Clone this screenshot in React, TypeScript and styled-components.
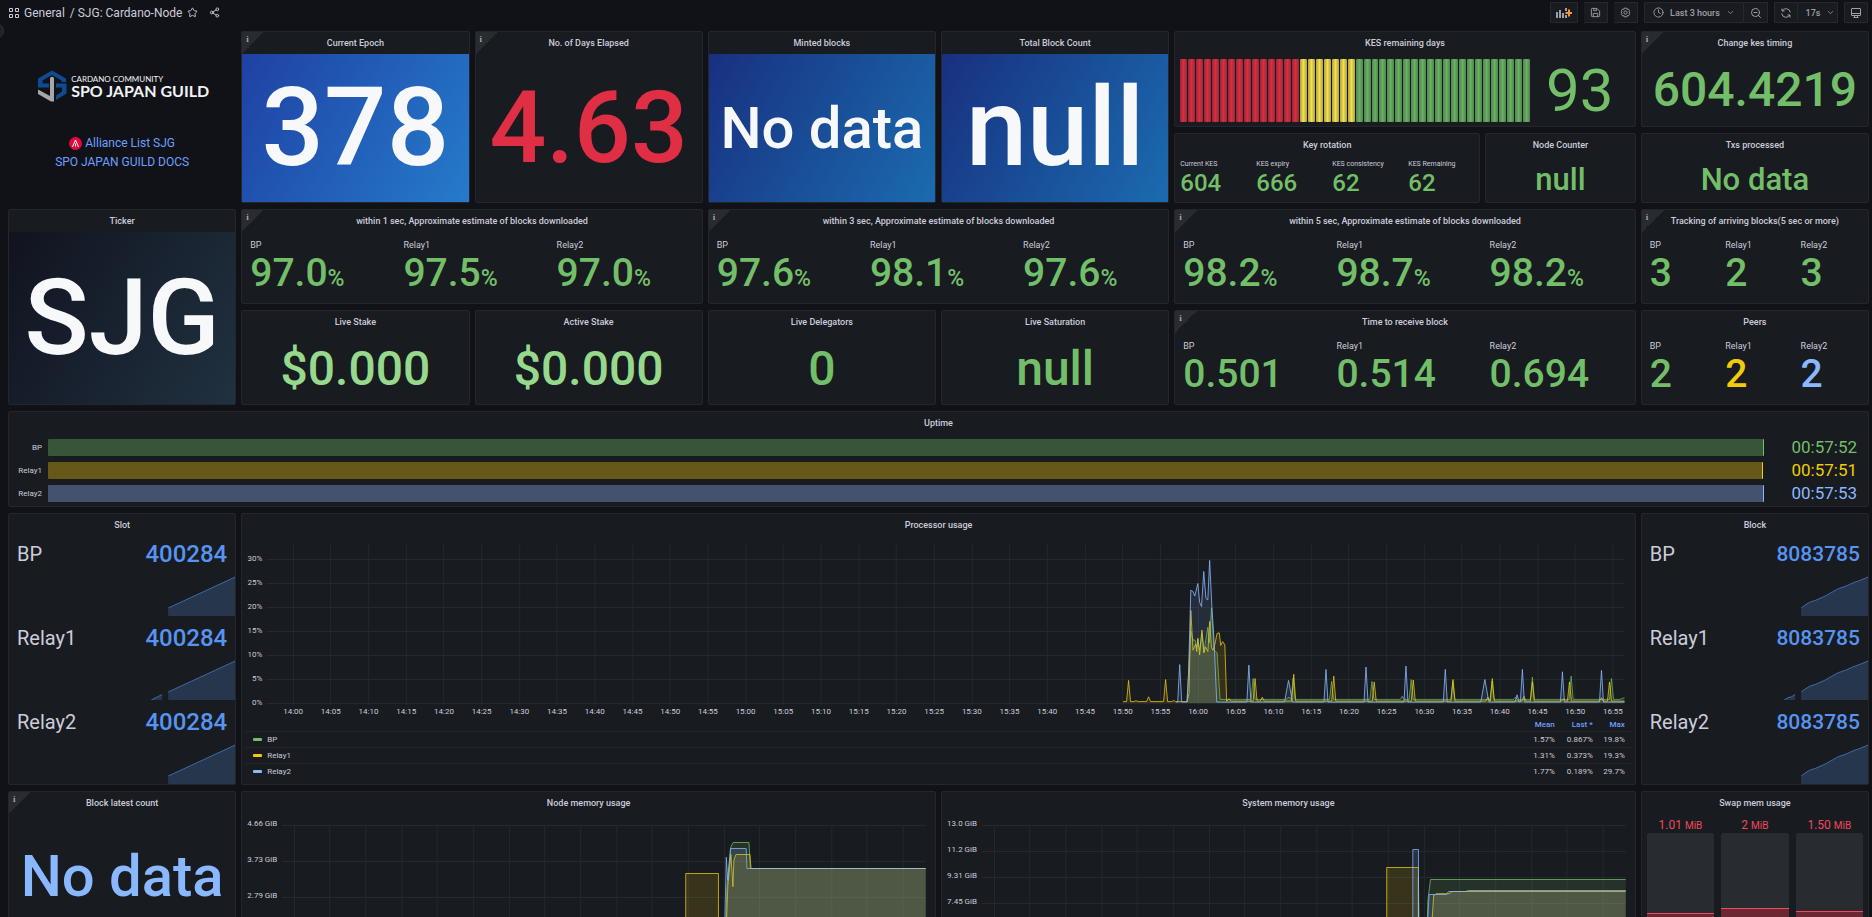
import React from "react";
import styled, { createGlobalStyle, css } from "styled-components";
import { Star, Share2, Clock, ChevronDown, ZoomOut } from "lucide-react";

const GREEN = "#73bf69";
const LIGHT_GREEN = "#96d98d";
const YELLOW = "#f2cc0c";
const BLUE = "#8ab8ff";
const STRONG_BLUE = "#5794f2";
const RED = "#e02f44";
const TEXT = "#ccccdc";
const LINK = "#6e9fff";

const Global = createGlobalStyle`
  * { box-sizing: border-box; }
  body {
    margin: 0;
    background: #111217;
    color: ${TEXT};
    font-family: Roboto, "Liberation Sans", sans-serif;
    font-size: 9px;
  }
  a { color: inherit; text-decoration: none; }
  button { font: inherit; }
`;

const Page = styled.div`
  height: 100vh;
  overflow: hidden;
`;

/* ---------- top bar ---------- */

const TopBar = styled.header`
  display: flex;
  align-items: center;
  justify-content: space-between;
  height: 25px;
  padding: 0 4px 0 8px;
`;

const Crumbs = styled.nav`
  display: flex;
  align-items: center;
  font-size: 12px;
  line-height: 16px;
  white-space: pre;
`;

const CrumbLink = styled.a`
  margin-left: 5px;
`;

const CrumbActions = styled.div`
  display: flex;
  gap: 11px;
  margin-left: 5px;
`;

const BareButton = styled.button`
  display: flex;
  padding: 0;
  border: 0;
  background: none;
  color: ${TEXT};
`;

const Tools = styled.div`
  display: flex;
  gap: 6px;
`;

const ToolGroup = styled.div`
  display: flex;
`;

const ToolButton = styled.button<{ $width: number }>`
  display: flex;
  align-items: center;
  justify-content: center;
  width: ${(p) => p.$width}px;
  height: 21px;
  padding: 0;
  border: 1px solid #26282e;
  border-radius: 1px;
  background: #181b1f;
  color: #9d9fab;
  font-size: 9px;
  font-weight: 500;
  & + & { border-left: 0; }
`;

const ToolText = styled.span`
  margin: 0 6px;
  white-space: nowrap;
`;

const SideToggle = styled.button`
  position: absolute;
  left: -12px;
  top: 23px;
  width: 16px;
  height: 16px;
  padding: 0;
  border: 1px solid #2d2f35;
  border-radius: 50%;
  background: #202226;
`;

/* ---------- panel grid ---------- */

const Board = styled.main`
  display: grid;
  grid-template-columns: repeat(24, minmax(0, 1fr));
  grid-template-rows: 96px 70px 95px 95px 96px 272px 147px;
  gap: 6px 5px;
  padding: 6px 3px 6px 8px;
`;

type Place = { $col: number; $span: number; $row: number; $rows?: number };

const place = css<Place>`
  grid-column: ${(p) => p.$col} / span ${(p) => p.$span};
  grid-row: ${(p) => p.$row} / span ${(p) => p.$rows ?? 1};
`;

const PanelBox = styled.section<Place>`
  ${place}
  position: relative;
  display: flex;
  flex-direction: column;
  min-width: 0;
  border: 1px solid #24262b;
  border-radius: 2px;
  background: #181b1f;
`;

const PanelTitle = styled.h2`
  flex: none;
  margin: 0;
  font-size: 9px;
  font-weight: 500;
  line-height: 22px;
  text-align: center;
  white-space: nowrap;
`;

const InfoCorner = styled.span`
  position: absolute;
  left: 0;
  top: 0;
  width: 22px;
  height: 22px;
  padding: 3px 0 0 4px;
  background: linear-gradient(135deg, #282b30 50%, transparent 50%);
  color: #a4a5af;
  font: 700 9px/9px "Liberation Serif", serif;
`;

type PanelProps = {
  title: string;
  col: number;
  span: number;
  row: number;
  rows?: number;
  info?: boolean;
  children: React.ReactNode;
};

const Panel = ({ title, col, span, row, rows, info, children }: PanelProps) => (
  <PanelBox $col={col} $span={span} $row={row} $rows={rows}>
    {info && <InfoCorner>i</InfoCorner>}
    <PanelTitle>{title}</PanelTitle>
    {children}
  </PanelBox>
);

/* ---------- stat panels ---------- */

const BigValue = styled.div<{ $size: number; $color: string; $fill?: string }>`
  flex: 1;
  display: flex;
  align-items: center;
  justify-content: center;
  min-height: 0;
  background: ${(p) => p.$fill ?? "none"};
  color: ${(p) => p.$color};
  font-size: ${(p) => p.$size}px;
  font-weight: 500;
  line-height: 1;
  white-space: nowrap;
`;

const StatRow = styled.dl<{ $compact?: boolean }>`
  display: flex;
  margin: 0;
  padding-top: ${(p) => (p.$compact ? 4 : 7)}px;
`;

const Stat = styled.div<{ $compact?: boolean }>`
  flex: 1;
  min-width: 0;
  padding-left: ${(p) => (p.$compact ? 5 : 8)}px;
  white-space: nowrap;
`;

const StatLabel = styled.dt<{ $compact?: boolean }>`
  font-size: ${(p) => (p.$compact ? 7 : 9)}px;
  line-height: ${(p) => (p.$compact ? 8 : 12)}px;
`;

const StatValue = styled.dd<{ $compact?: boolean; $color: string }>`
  margin: 0;
  color: ${(p) => p.$color};
  font-size: ${(p) => (p.$compact ? 24 : 39)}px;
  font-weight: 500;
  line-height: ${(p) => (p.$compact ? 30 : 44)}px;
`;

const Unit = styled.span`
  font-size: 23px;
`;

type StatItem = { label: string; value: string; unit?: string; color?: string };

const Stats = ({ items, compact }: { items: StatItem[]; compact?: boolean }) => (
  <StatRow $compact={compact}>
    {items.map((s) => (
      <Stat key={s.label} $compact={compact}>
        <StatLabel $compact={compact}>{s.label}</StatLabel>
        <StatValue $compact={compact} $color={s.color ?? GREEN}>
          {s.value}
          {s.unit && <Unit>{s.unit}</Unit>}
        </StatValue>
      </Stat>
    ))}
  </StatRow>
);

const nodes = (values: string[], unit?: string, colors: string[] = []): StatItem[] =>
  ["BP", "Relay1", "Relay2"].map((label, i) => ({ label, value: values[i], unit, color: colors[i] }));

/* ---------- guild text panel ---------- */

const Guild = styled.section<Place>`
  ${place}
  display: flex;
  flex-direction: column;
  align-items: center;
  padding-top: 39px;
`;

const GuildBrand = styled.div`
  display: flex;
  align-items: center;
  gap: 4px;
  padding-left: 3px;
  color: #f2f2f4;
  font-family: Lato, sans-serif;
  white-space: nowrap;
`;

const GuildSmall = styled.div`
  font-size: 8px;
  font-weight: 400;
  line-height: 9px;
`;

const GuildName = styled.div`
  font-size: 16px;
  font-weight: 700;
  line-height: 14px;
`;

const GuildLinks = styled.div`
  display: flex;
  flex-direction: column;
  align-items: center;
  margin-top: 32px;
  color: ${LINK};
  font-size: 12px;
  line-height: 19px;
`;

const GuildLink = styled.a`
  display: flex;
  align-items: center;
  gap: 3px;
`;

const GuildMark = () => (
  <svg width="29" height="32" viewBox="0 0 29 32" aria-hidden="true">
    <path d="M0 17.500V8.500L14 0.500L28 8.500V12H23.500V10.500L14 5 4.500 10.500V13.500H11V17.500Z" fill="#0f4a94" />
    <path d="M28.500 13.500V23.500L18 30V25.500L24 21.500V17.500H18V13.500Z" fill="#0f4a94" />
    <path d="M12 8Q14 5.500 16 8V31.500H13L0 24V19.500L12 26Z" fill="#a6a7a9" />
  </svg>
);

/* ---------- KES gauge ---------- */

const Gauge = styled.div`
  flex: 1;
  display: flex;
  padding: 5px 5px 4px;
`;

const Cells = styled.div`
  flex: 1;
  display: flex;
  gap: 1px;
`;

const Cell = styled.span<{ $edge: string; $mid: string }>`
  flex: 1;
  border-radius: 1px;
  background: linear-gradient(90deg, ${(p) => p.$edge}, ${(p) => p.$mid}, ${(p) => p.$edge});
`;

const GaugeValue = styled.span`
  width: 100px;
  color: ${GREEN};
  font-size: 60px;
  line-height: 63px;
  text-align: center;
`;

const cellTone = (i: number) =>
  i < 15 ? ["#98283a", "#d92e43"] : i < 22 ? ["#aea03e", "#f2e04d"] : ["#4f8450", "#6bb062"];

/* ---------- uptime ---------- */

const Bars = styled.div`
  display: flex;
  flex-direction: column;
  gap: 6px;
  padding: 5px 0 0 7px;
`;

const BarRow = styled.div`
  display: grid;
  grid-template-columns: 26px minmax(0, 1fr) 98px;
  column-gap: 6px;
  align-items: center;
  height: 17px;
`;

const BarName = styled.span`
  font-size: 8px;
  text-align: right;
`;

const BarTrack = styled.div`
  height: 17px;
`;

const BarFill = styled.div<{ $fill: string; $edge: string }>`
  height: 17px;
  border-right: 1px solid ${(p) => p.$edge};
  border-radius: 1px;
  background: ${(p) => p.$fill};
`;

const BarValue = styled.span<{ $color: string }>`
  padding-right: 11px;
  color: ${(p) => p.$color};
  font-size: 17px;
  line-height: 17px;
  text-align: right;
`;

const uptime = [
  { name: "BP", value: "00:57:52", seconds: 3472, fill: "#385539", edge: GREEN },
  { name: "Relay1", value: "00:57:51", seconds: 3471, fill: "#655818", edge: YELLOW },
  { name: "Relay2", value: "00:57:53", seconds: 3473, fill: "#43536f", edge: BLUE },
];

/* ---------- slot / block ---------- */

const SparkList = styled.div`
  flex: 1;
  display: flex;
  flex-direction: column;
  justify-content: flex-end;
  gap: 8px;
`;

const SparkItem = styled.div`
  display: flex;
  flex-direction: column;
  gap: 8px;
`;

const SparkHead = styled.div`
  display: flex;
  justify-content: space-between;
  padding: 0 8px;
  font-size: 20px;
  line-height: 28px;
`;

const SparkValue = styled.span<{ $size: number }>`
  color: ${STRONG_BLUE};
  font-size: ${(p) => p.$size}px;
  font-weight: 500;
`;

const Stretch = styled.svg`
  display: block;
  width: 100%;
  overflow: hidden;
`;

type Pt = [number, number];
const toPath = (pts: Pt[]) => "M" + pts.map(([x, y]) => `${x} ${y}`).join("L");
const toArea = (pts: Pt[], base: number) =>
  `${toPath(pts)}L${pts[pts.length - 1][0]} ${base}L${pts[0][0]} ${base}Z`;

const Area = ({ pts, base, color, fillOpacity, opacity = 0.8 }: {
  pts: Pt[]; base: number; color: string; fillOpacity: number; opacity?: number;
}) => (
  <g>
    <path d={toArea(pts, base)} fill={color} fillOpacity={fillOpacity} />
    <path d={toPath(pts)} fill="none" stroke={color} strokeOpacity={opacity} vectorEffect="non-scaling-stroke" />
  </g>
);

const slotLine: Pt[] = [[159, 32], [226, 1]];
const slotGap: Pt[] = [[142, 40], [153, 34.5]];
const blockLine: Pt[] = [[159, 32], [163, 29], [168, 26], [173, 24.5], [183, 20], [196, 12.7], [204, 10], [211, 6.7], [216, 5], [226, 1]];
const blockGap: Pt[] = [[142, 40], [146, 37.5], [149, 37], [153, 34.5]];

const Sparks = ({ value, size, line, gap }: { value: string; size: number; line: Pt[]; gap: Pt[] }) => (
  <SparkList>
    {["BP", "Relay1", "Relay2"].map((name) => (
      <SparkItem key={name}>
        <SparkHead>
          <span>{name}</span>
          <SparkValue $size={size}>{value}</SparkValue>
        </SparkHead>
        <Stretch height="40" viewBox="0 0 226 40" preserveAspectRatio="none">
          {name === "Relay1" && <Area pts={gap} base={40} color={STRONG_BLUE} fillOpacity={0.22} opacity={0.6} />}
          <Area pts={line} base={40} color={STRONG_BLUE} fillOpacity={0.22} opacity={0.6} />
        </Stretch>
      </SparkItem>
    ))}
  </SparkList>
);

/* ---------- processor chart ---------- */

const PlotRow = styled.div<{ $top: number; $right: number }>`
  display: flex;
  gap: 5px;
  padding: ${(p) => p.$top}px ${(p) => p.$right}px 0 4px;
`;

const YAxis = styled.div<{ $width: number; $step: number; $lead?: number }>`
  flex: none;
  display: flex;
  flex-direction: column;
  gap: ${(p) => p.$step - 10}px;
  width: ${(p) => p.$width}px;
  padding-top: ${(p) => p.$lead ?? 0}px;
  font-size: 8px;
  line-height: 10px;
  text-align: right;
  white-space: nowrap;
`;

const PlotArea = styled.div<{ $lead?: number }>`
  flex: 1;
  min-width: 0;
  padding-top: ${(p) => p.$lead ?? 0}px;
`;

const XAxis = styled.div`
  display: grid;
  grid-template-columns: repeat(36, minmax(0, 1fr));
  margin: 1px -7px 0 7px;
  font-size: 8px;
  line-height: 12px;
  text-align: center;
`;

const CpuLegend = styled.table`
  margin: 0 4px;
  border-collapse: collapse;
  font-size: 8px;
  line-height: 15px;
  th, td { padding: 0; font-weight: 400; text-align: right; }
  thead th { color: ${LINK}; font-weight: 500; line-height: 13px; }
  tbody tr { border-top: 1px solid #24272c; }
  th:first-child { text-align: left; padding-left: 7px; }
  th:last-child, td:last-child { padding-right: 6px; }
`;

const NumCol = styled.col<{ $width: number }>`
  width: ${(p) => p.$width}px;
`;

const Swatch = styled.i<{ $color: string }>`
  display: inline-block;
  width: 9px;
  height: 3px;
  margin-right: 5px;
  border-radius: 1px;
  background: ${(p) => p.$color};
  vertical-align: middle;
`;

/* Joins a flat idle level with narrow load peaks: [x, percent, half width]. */
const peaks = (from: number, to: number, idle: number, list: [number, number, number?][]): Pt[] => {
  const out: Pt[] = [[from, idle]];
  list.forEach(([x, v, w = 2]) => out.push([x - w, idle], [x, v], [x + w, idle]));
  out.push([to, idle]);
  return out;
};

const cpuYellow: Pt[] = [
  ...peaks(855, 919, 0.3, [[860.6, 4.7], [868, 0.5], [880.6, 1.3], [897.6, 4.9], [905.7, 0.5]]),
  [921, 2], [922.8, 19.3], [925, 11], [927.6, 12.3], [928.7, 10.7], [929.8, 13.5], [931.6, 10], [933.9, 15.2],
  [936, 10.5], [937.5, 11.7], [939.8, 10.7], [941.6, 17], [943.5, 11.5], [945, 11], [946.8, 12.2], [949, 14.5],
  [951.2, 14.6], [952.7, 12], [954.6, 12.8], [956.8, 12.1],
  ...peaks(958.6, 1356, 0.4, [[961, 0.9], [987, 5.1], [994.2, 1.2], [1025.6, 6], [1065.6, 5.6], [1106, 4.4],
    [1145, 4.8], [1184.7, 4.9], [1219.5, 1.2], [1224, 5.1], [1255.5, 1.4], [1264, 4.4], [1295, 0.9], [1301, 4.4], [1333, 1.1], [1341, 4.4]]),
];
const cpuGreen: Pt[] = [
  [919, 0.3], [922.8, 15], [925, 13.1], [927, 13.1], [928.7, 11.5], [929.8, 13.3], [931.6, 11], [933.9, 14.6],
  [935.7, 10.5], [939.8, 15.8], [941.3, 12.5], [943.5, 19.8], [946, 11], [949, 10.5],
  ...peaks(952, 1351, 0.75, [[985, 5.1], [1020.8, 1.2, 3], [1025, 5.2], [1063.4, 4.5], [1103.7, 4.5], [1134, 1.4],
    [1142.9, 4.9], [1184.5, 4.5], [1223.7, 4.6], [1247, 1.2], [1264, 5.4], [1302.7, 5.6], [1343, 5.1]]),
  [1356, 1.1],
];
const cpuBlue: Pt[] = [
  ...peaks(908, 919, 0.2, [[911.7, 8]]),
  [920.5, 6], [922.8, 23.5], [925, 23.2], [926.8, 22.3], [929.8, 24.9], [931.6, 21], [933.5, 20.1], [935.7, 27.4],
  [937.9, 21.8], [939.8, 21.5], [941.6, 29.7], [943.8, 20.2], [946, 13],
  ...peaks(948.7, 1356, 0.2, [[980.8, 7.9], [1020.4, 4.7, 4], [1057.8, 7], [1097.8, 7.5], [1137.7, 7.7], [1177, 7],
    [1216.5, 4.9, 4], [1248.7, 1.7], [1254, 7], [1294, 6.5], [1333, 6.8]]),
];

const cpuBase = 159;
const cpuScale = (pts: Pt[]): Pt[] => pts.map(([x, v]) => [x, Math.round((cpuBase - v * 4.8) * 10) / 10]);
const clock = (minutes: number) =>
  `${14 + Math.floor(minutes / 60)}:${String(minutes % 60).padStart(2, "0")}`;

const GridLine = ({ d }: { d: string }) => (
  <path d={d} stroke="#25282d" fill="none" vectorEffect="non-scaling-stroke" />
);

const ProcessorChart = () => (
  <>
    <PlotRow $top={8} $right={10}>
      <YAxis $width={16} $step={24} $lead={10}>
        {["30%", "25%", "20%", "15%", "10%", "5%", "0%"].map((t) => <span key={t}>{t}</span>)}
      </YAxis>
      <PlotArea>
        <Stretch height="161" viewBox="0 0 1356 161" preserveAspectRatio="none">
          {[0, 1, 2, 3, 4, 5, 6].map((i) => <GridLine key={i} d={`M0 ${15.5 + i * 24}H1356`} />)}
          {Array.from({ length: 36 }, (_, i) => (
            <GridLine key={i} d={`M${Math.round(25.7 + i * 37.67) + 0.5} 0V161`} />
          ))}
          <Area pts={cpuScale(cpuGreen)} base={cpuBase} color={GREEN} fillOpacity={0.16} opacity={0.7} />
          <Area pts={cpuScale(cpuYellow)} base={cpuBase} color={YELLOW} fillOpacity={0.13} opacity={0.75} />
          <Area pts={cpuScale(cpuBlue)} base={cpuBase} color={BLUE} fillOpacity={0.12} opacity={0.8} />
        </Stretch>
        <XAxis>
          {Array.from({ length: 36 }, (_, i) => <span key={i}>{clock(i * 5)}</span>)}
        </XAxis>
      </PlotArea>
    </PlotRow>
    <CpuLegend>
      <colgroup>
        <col />
        <NumCol $width={44} />
        <NumCol $width={38} />
        <NumCol $width={38} />
      </colgroup>
      <thead>
        <tr><th /><th scope="col">Mean</th><th scope="col">Last *</th><th scope="col">Max</th></tr>
      </thead>
      <tbody>
        {[
          ["BP", GREEN, "1.57%", "0.867%", "19.8%"],
          ["Relay1", YELLOW, "1.31%", "0.373%", "19.3%"],
          ["Relay2", BLUE, "1.77%", "0.189%", "29.7%"],
        ].map(([name, color, mean, last, max]) => (
          <tr key={name}>
            <th scope="row"><Swatch $color={color} />{name}</th>
            <td>{mean}</td><td>{last}</td><td>{max}</td>
          </tr>
        ))}
      </tbody>
    </CpuLegend>
  </>
);

/* ---------- memory charts ---------- */

type Series = { color: string; pts: Pt[] };

const nodeMem: Series[] = [
  { color: GREEN, pts: [[441.5, 112], [443, 62], [447, 21.7], [449.3, 17.5], [465, 17.5], [466.3, 43.5], [641, 43.5]] },
  { color: YELLOW, pts: [[402, 112], [402, 48.5], [434.6, 48.5], [434.6, 112]] },
  { color: YELLOW, pts: [[442, 112], [444, 60], [447, 29.5], [449, 61.7], [450, 35], [452, 29.5], [466, 29.5], [467, 43.5], [641, 43.5]] },
  { color: BLUE, pts: [[440.6, 112], [442.4, 32.3], [443.8, 55], [446.6, 23.5], [462.2, 23.5], [463, 43.5], [641, 43.5]] },
];

const systemMem: Series[] = [
  { color: GREEN, pts: [[434.5, 112], [434.5, 53], [435.5, 112]] },
  { color: GREEN, pts: [[443, 112], [444, 75], [446.6, 54.5], [641, 54.5]] },
  { color: YELLOW, pts: [[403, 112], [403, 42.5], [434.6, 42.5], [434.6, 112]] },
  { color: YELLOW, pts: [[447, 112], [449.8, 70], [453, 68.7], [465.4, 68.7], [468, 66.5], [641, 66.5]] },
  { color: BLUE, pts: [[429, 112], [429, 24.5], [434.6, 24.5], [434.6, 112]] },
  { color: BLUE, pts: [[443, 112], [445.2, 69.5], [462.6, 69.5], [464.5, 66.5], [481.5, 66.5], [484.7, 65.5], [641, 65.5]] },
];

const MemoryChart = ({ ticks, step, series }: { ticks: string[]; step: number; series: Series[] }) => (
  <PlotRow $top={5} $right={9}>
    <YAxis $width={31} $step={step}>
      {ticks.map((t) => <span key={t}>{t}</span>)}
    </YAxis>
    <PlotArea $lead={6}>
      <Stretch height="112" viewBox="0 0 641 112" preserveAspectRatio="none">
        {ticks.map((t, i) => <GridLine key={t} d={`M0 ${0.5 + i * step}H641`} />)}
        {Array.from({ length: 18 }, (_, i) => (
          <GridLine key={i} d={`M${Math.round(11.8 + i * 35.65) + 0.5} 0V112`} />
        ))}
        {series.map((s, i) => (
          <Area key={i} pts={s.pts} base={112} color={s.color} fillOpacity={0.15} opacity={0.75} />
        ))}
      </Stretch>
    </PlotArea>
  </PlotRow>
);

/* ---------- swap ---------- */

const SwapRow = styled.div`
  flex: 1;
  display: flex;
  gap: 7px;
  padding: 4px 5px 5px;
`;

const SwapCol = styled.div`
  flex: 1;
  display: flex;
  flex-direction: column;
  color: #f2495c;
  font-size: 12px;
  line-height: 14px;
  text-align: center;
  white-space: nowrap;
`;

const SwapUnit = styled.span`
  font-size: 10px;
`;

const SwapTrack = styled.div`
  flex: 1;
  display: flex;
  align-items: flex-end;
  border-radius: 2px;
  background: #282b30;
`;

const SwapFill = styled.div`
  flex: 1;
  border-top: 1px solid #f2495c;
  background: #6b2732;
`;

/* ---------- toolbar icons ---------- */

const AppsIcon = () => (
  <svg width="11" height="11" viewBox="0 0 11 11" fill="none" stroke="currentColor" aria-hidden="true">
    <path d="M1.500 1.500h3v3h-3zM7.500 1.500h3v3h-3zM1.500 7.500h3v3h-3zM7.500 7.500h3v3h-3z" />
  </svg>
);
const AddPanelIcon = () => (
  <svg width="16" height="12" viewBox="0 0 16 12" aria-hidden="true">
    <path d="M0 5h2v6H0zM3 3h2v8H3zM6 6h2v5H6zM9 1h2v3H9zM9 8h2v3H9z" fill="#9d9fab" />
    <path d="M12 2.500h2v2.500h2v2h-2v2.500h-2V7H9.500V5H12z" fill="#f8962e" />
  </svg>
);
const SaveIcon = () => (
  <svg width="11" height="11" viewBox="0 0 24 24" fill="none" stroke="currentColor" strokeWidth="2" aria-hidden="true">
    <path d="M3 5a2 2 0 0 1 2-2h10l6 6v10a2 2 0 0 1-2 2H5a2 2 0 0 1-2-2zM8 3v5h6V3M7 21v-7h10v7" />
  </svg>
);
const CogIcon = () => (
  <svg width="11" height="11" viewBox="0 0 24 24" fill="none" stroke="currentColor" strokeWidth="2" aria-hidden="true">
    <path d="M9.500 2.500h5l.7 2.700 2.600-1 3 3.600-1.300 2.400 2.500 1.800-2.500 1.800 1.300 2.400-3 3.600-2.600-1-.7 2.700h-5l-.7-2.700-2.600 1-3-3.600 1.300-2.400L2 12l2.500-1.800-1.300-2.400 3-3.600 2.600 1z" />
    <circle cx="12" cy="12" r="3.500" />
  </svg>
);
const SyncIcon = () => (
  <svg width="12" height="12" viewBox="0 0 24 24" fill="none" stroke="currentColor" strokeWidth="2" aria-hidden="true">
    <path d="M4 3v5h5M20 21v-5h-5M4.500 8A8.500 8.500 0 0 1 20.500 11M19.500 16A8.500 8.500 0 0 1 3.500 13" />
  </svg>
);
const MonitorIcon = () => (
  <svg width="12" height="12" viewBox="0 0 24 24" fill="none" stroke="currentColor" strokeWidth="2" aria-hidden="true">
    <path d="M4 3h16a1 1 0 0 1 1 1v12a1 1 0 0 1-1 1H4a1 1 0 0 1-1-1V4a1 1 0 0 1 1-1zM3 13h18M9 17v4M15 17v4M7 21h10" />
  </svg>
);

const DEEP = "linear-gradient(120deg, #18307f, #1b6bb0)";

export default function App() {
  return (
    <Page>
      <Global />
      <TopBar>
        <Crumbs>
          <AppsIcon />
          <CrumbLink href="#general">General</CrumbLink>
          <CrumbLink href="#dashboard">/ SJG: Cardano-Node</CrumbLink>
          <CrumbActions>
            <BareButton aria-label="Mark as favorite"><Star size={11} /></BareButton>
            <BareButton aria-label="Share dashboard"><Share2 size={11} /></BareButton>
          </CrumbActions>
        </Crumbs>
        <Tools>
          <ToolButton $width={28} aria-label="Add panel"><AddPanelIcon /></ToolButton>
          <ToolButton $width={24} aria-label="Save dashboard"><SaveIcon /></ToolButton>
          <ToolButton $width={24} aria-label="Dashboard settings"><CogIcon /></ToolButton>
          <ToolGroup>
            <ToolButton $width={100}>
              <Clock size={11} /><ToolText>Last 3 hours</ToolText><ChevronDown size={9} />
            </ToolButton>
            <ToolButton $width={24} aria-label="Zoom out"><ZoomOut size={12} /></ToolButton>
          </ToolGroup>
          <ToolGroup>
            <ToolButton $width={24} aria-label="Refresh"><SyncIcon /></ToolButton>
            <ToolButton $width={40}><ToolText>17s</ToolText><ChevronDown size={9} /></ToolButton>
          </ToolGroup>
          <ToolButton $width={24} aria-label="Cycle view mode"><MonitorIcon /></ToolButton>
        </Tools>
      </TopBar>
      <SideToggle aria-label="Open menu" />

      <Board>
        <Guild $col={1} $span={3} $row={1} $rows={2}>
          <GuildBrand>
            <GuildMark />
            <div>
              <GuildSmall>CARDANO COMMUNITY</GuildSmall>
              <GuildName>SPO JAPAN GUILD</GuildName>
            </div>
          </GuildBrand>
          <GuildLinks>
            <GuildLink href="#alliance">
              <svg width="13" height="13" viewBox="0 0 13 13" aria-hidden="true">
                <circle cx="6.500" cy="6.500" r="6.500" fill="#e3083c" />
                <path d="M3.500 10L6.500 3L9.500 10M6.500 6.500V9.500" fill="none" stroke="#fff" />
              </svg>
              Alliance List SJG
            </GuildLink>
            <GuildLink href="#docs">SPO JAPAN GUILD DOCS</GuildLink>
          </GuildLinks>
        </Guild>

        <Panel title="Current Epoch" col={4} span={3} row={1} rows={2} info>
          <BigValue $size={110} $color="#f7f8fa" $fill="linear-gradient(120deg, #1f41a4, #257bcb)">378</BigValue>
        </Panel>
        <Panel title="No. of Days Elapsed" col={7} span={3} row={1} rows={2} info>
          <BigValue $size={100} $color={RED}>4.63</BigValue>
        </Panel>
        <Panel title="Minted blocks" col={10} span={3} row={1} rows={2}>
          <BigValue $size={58} $color="#f7f8fa" $fill={DEEP}>No data</BigValue>
        </Panel>
        <Panel title="Total Block Count" col={13} span={3} row={1} rows={2}>
          <BigValue $size={110} $color="#f7f8fa" $fill={DEEP}>null</BigValue>
        </Panel>
        <Panel title="KES remaining days" col={16} span={6} row={1}>
          <Gauge>
            <Cells>
              {Array.from({ length: 44 }, (_, i) => {
                const [edge, mid] = cellTone(i);
                return <Cell key={i} $edge={edge} $mid={mid} />;
              })}
            </Cells>
            <GaugeValue>93</GaugeValue>
          </Gauge>
        </Panel>
        <Panel title="Change kes timing" col={22} span={3} row={1} info>
          <BigValue $size={48} $color={GREEN}>604.4219</BigValue>
        </Panel>
        <Panel title="Key rotation" col={16} span={4} row={2}>
          <Stats
            compact
            items={[
              { label: "Current KES", value: "604" },
              { label: "KES expiry", value: "666" },
              { label: "KES consistency", value: "62" },
              { label: "KES Remaining", value: "62" },
            ]}
          />
        </Panel>
        <Panel title="Node Counter" col={20} span={2} row={2}>
          <BigValue $size={31} $color={GREEN}>null</BigValue>
        </Panel>
        <Panel title="Txs processed" col={22} span={3} row={2}>
          <BigValue $size={31} $color={GREEN}>No data</BigValue>
        </Panel>

        <Panel title="Ticker" col={1} span={3} row={3} rows={2}>
          <BigValue $size={106} $color="#f7f8fa" $fill="linear-gradient(120deg, #11131f, #203140)">SJG</BigValue>
        </Panel>
        <Panel title="within 1 sec, Approximate estimate of blocks downloaded" col={4} span={6} row={3} info>
          <Stats items={nodes(["97.0", "97.5", "97.0"], "%")} />
        </Panel>
        <Panel title="within 3 sec, Approximate estimate of blocks downloaded" col={10} span={6} row={3} info>
          <Stats items={nodes(["97.6", "98.1", "97.6"], "%")} />
        </Panel>
        <Panel title="within 5 sec, Approximate estimate of blocks downloaded" col={16} span={6} row={3} info>
          <Stats items={nodes(["98.2", "98.7", "98.2"], "%")} />
        </Panel>
        <Panel title="Tracking of arriving blocks(5 sec or more)" col={22} span={3} row={3} info>
          <Stats items={nodes(["3", "2", "3"])} />
        </Panel>
        <Panel title="Live Stake" col={4} span={3} row={4}>
          <BigValue $size={48} $color={LIGHT_GREEN}>$0.000</BigValue>
        </Panel>
        <Panel title="Active Stake" col={7} span={3} row={4}>
          <BigValue $size={48} $color={LIGHT_GREEN}>$0.000</BigValue>
        </Panel>
        <Panel title="Live Delegators" col={10} span={3} row={4}>
          <BigValue $size={48} $color={GREEN}>0</BigValue>
        </Panel>
        <Panel title="Live Saturation" col={13} span={3} row={4}>
          <BigValue $size={48} $color={GREEN}>null</BigValue>
        </Panel>
        <Panel title="Time to receive block" col={16} span={6} row={4} info>
          <Stats items={nodes(["0.501", "0.514", "0.694"])} />
        </Panel>
        <Panel title="Peers" col={22} span={3} row={4}>
          <Stats items={nodes(["2", "2", "2"], undefined, [GREEN, YELLOW, BLUE])} />
        </Panel>

        <Panel title="Uptime" col={1} span={24} row={5}>
          <Bars>
            {uptime.map((u) => (
              <BarRow key={u.name}>
                <BarName>{u.name}</BarName>
                <BarTrack>
                  <BarFill $fill={u.fill} $edge={u.edge} style={{ width: `${(u.seconds / 3473) * 100}%` }} />
                </BarTrack>
                <BarValue $color={u.edge}>{u.value}</BarValue>
              </BarRow>
            ))}
          </Bars>
        </Panel>

        <Panel title="Slot" col={1} span={3} row={6}>
          <Sparks value="400284" size={24} line={slotLine} gap={slotGap} />
        </Panel>
        <Panel title="Processor usage" col={4} span={18} row={6}>
          <ProcessorChart />
        </Panel>
        <Panel title="Block" col={22} span={3} row={6}>
          <Sparks value="8083785" size={21} line={blockLine} gap={blockGap} />
        </Panel>

        <Panel title="Block latest count" col={1} span={3} row={7} info>
          <BigValue $size={58} $color={BLUE}>No data</BigValue>
        </Panel>
        <Panel title="Node memory usage" col={4} span={9} row={7}>
          <MemoryChart ticks={["4.66 GiB", "3.73 GiB", "2.79 GiB"]} step={36} series={nodeMem} />
        </Panel>
        <Panel title="System memory usage" col={13} span={9} row={7}>
          <MemoryChart ticks={["13.0 GiB", "11.2 GiB", "9.31 GiB", "7.45 GiB"]} step={26} series={systemMem} />
        </Panel>
        <Panel title="Swap mem usage" col={22} span={3} row={7}>
          <SwapRow>
            {[["1.01", 19], ["2", 24], ["1.50", 21]].map(([v, level]) => (
              <SwapCol key={v}>
                <span>{v} <SwapUnit>MiB</SwapUnit></span>
                <SwapTrack><SwapFill style={{ height: `${level}%` }} /></SwapTrack>
              </SwapCol>
            ))}
          </SwapRow>
        </Panel>
      </Board>
    </Page>
  );
}
